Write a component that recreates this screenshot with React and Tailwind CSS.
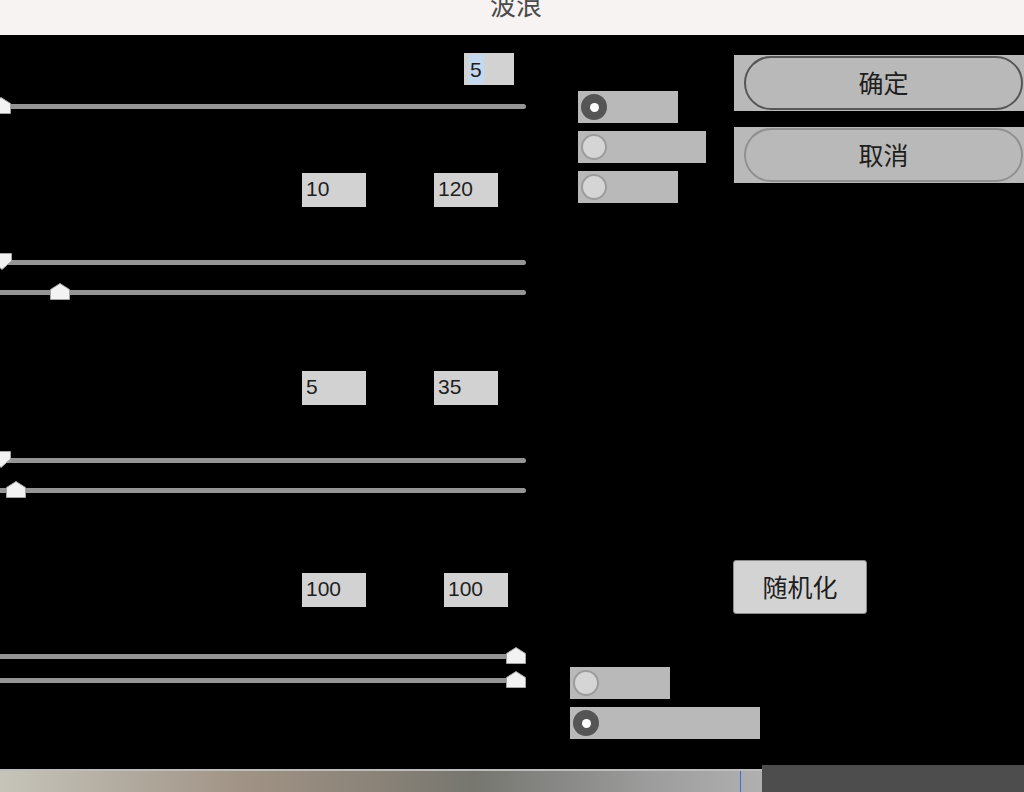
import React from "react";

const CJK = { fontFamily: '"Noto Sans CJK SC", "Noto Sans", sans-serif' };
const NUM = { fontFamily: '"Liberation Sans", Arial, sans-serif' };

function Thumb({ left, down }) {
  return (
    <svg
      className="absolute top-[1px]"
      style={{ left }}
      width="20"
      height="17"
      viewBox="0 0 20 17"
    >
      {down ? (
        <polygon
          points="0.5,0.5 19.5,0.5 19.5,8 10,16.5 0.5,8"
          fill="#f2f2f2"
          stroke="#a3a3a3"
          strokeWidth="1"
        />
      ) : (
        <polygon
          points="10,0.5 19.5,6.5 19.5,16.5 0.5,16.5 0.5,6.5"
          fill="#f2f2f2"
          stroke="#a3a3a3"
          strokeWidth="1"
        />
      )}
    </svg>
  );
}

function Slider({ mt, thumb, down }) {
  return (
    <div className={`relative h-[20px] w-[526px] shrink-0 ${mt}`}>
      <div className="absolute left-0 right-0 top-[8px] h-[5px] rounded-r-full bg-[#959595]" />
      <Thumb left={thumb} down={down} />
    </div>
  );
}

function NumBox({ value, w = "w-[64px]", h = "h-[34px]", highlight }) {
  return (
    <div
      className={`${w} ${h} bg-[#d2d2d2] flex items-center pl-[4px] text-[21px] text-[#1e1e1e] leading-none`}
      style={NUM}
    >
      {highlight ? (
        <span className="bg-[#c4d9ee] px-[2px] py-[4px]">{value}</span>
      ) : (
        <span className="pb-[3px]">{value}</span>
      )}
    </div>
  );
}

function Radio({ w, selected }) {
  return (
    <div className={`${w} h-[32px] bg-[#b9b9b9] flex items-center pl-[3px]`}>
      {selected ? (
        <div className="w-[26px] h-[26px] rounded-full bg-[#555555] flex items-center justify-center">
          <div className="w-[9px] h-[9px] rounded-full bg-white" />
        </div>
      ) : (
        <div className="w-[26px] h-[26px] rounded-full bg-[#d5d5d5] border-2 border-[#9c9c9c]" />
      )}
    </div>
  );
}

function PillButton({ label, border }) {
  return (
    <div className="w-[290px] h-[56px] bg-[#b9b9b9] flex items-center pl-[10px]">
      <div
        className={`w-[279px] h-[54px] rounded-full border-2 ${border} flex items-center justify-center text-[25px] text-[#1e1e1e]`}
        style={CJK}
      >
        {label}
      </div>
    </div>
  );
}

export default function App() {
  return (
    <div className="w-[1024px] h-[792px] overflow-hidden flex flex-col bg-black">
      {/* Title bar */}
      <div className="h-[35px] shrink-0 bg-[#f6f3f2] overflow-hidden flex justify-center pl-[8px]">
        <div className="-mt-[9px] text-[26px] leading-[26px] text-[#4b4b4b]" style={CJK}>
          波浪
        </div>
      </div>

      {/* Main content */}
      <div className="h-[734px] shrink-0 bg-black flex">
        {/* Left column: sliders and fields */}
        <div className="w-[526px] shrink-0 flex flex-col">
          <div className="mt-[18px] ml-[464px]">
            <NumBox value="5" w="w-[50px]" h="h-[32px]" highlight />
          </div>
          <Slider mt="mt-[11px]" thumb={-9} />

          <div className="mt-[57px] flex">
            <div className="ml-[302px]"><NumBox value="10" /></div>
            <div className="ml-[68px]"><NumBox value="120" /></div>
          </div>
          <Slider mt="mt-[45px]" thumb={-8} down />
          <Slider mt="mt-[10px]" thumb={50} />

          <div className="mt-[69px] flex">
            <div className="ml-[302px]"><NumBox value="5" /></div>
            <div className="ml-[68px]"><NumBox value="35" /></div>
          </div>
          <Slider mt="mt-[45px]" thumb={-9} down />
          <Slider mt="mt-[10px]" thumb={6} />

          <div className="mt-[73px] flex">
            <div className="ml-[302px]"><NumBox value="100" /></div>
            <div className="ml-[78px]"><NumBox value="100" /></div>
          </div>
          <Slider mt="mt-[39px]" thumb={506} />
          <Slider mt="mt-[4px]" thumb={506} />
        </div>

        {/* Right region */}
        <div className="ml-[44px] w-[454px] shrink-0 flex flex-col">
          <div className="mt-[20px] flex">
            <div className="ml-[8px] w-[156px] mt-[36px] flex flex-col gap-[8px]">
              <Radio w="w-[100px]" selected />
              <Radio w="w-[128px]" />
              <Radio w="w-[100px]" />
            </div>
            <div className="flex flex-col gap-[16px]">
              <PillButton label="确定" border="border-[#565656]" />
              <PillButton label="取消" border="border-[#909090]" />
            </div>
          </div>

          <div className="mt-[357px] ml-[163px]">
            <div
              className="w-[134px] h-[54px] bg-[#d3d3d3] border border-[#8a8a8a] rounded-[3px] flex items-center justify-center text-[25px] text-[#1e1e1e]"
              style={CJK}
            >
              随机化
            </div>
          </div>

          <div className="mt-[53px] flex flex-col gap-[8px]">
            <Radio w="w-[100px]" />
            <Radio w="w-[190px]" selected />
          </div>
        </div>
      </div>

      {/* Bottom strip */}
      <div className="h-[23px] shrink-0 flex">
        <div
          className="relative w-[762px] h-[23px] border-t-2 border-[#bdbdbd]"
          style={{
            background:
              "linear-gradient(to right, #c6c4ba 0%, #b0a89c 18%, #a09385 32%, #8c8479 48%, #76766f 62%, #858583 72%, #9c9c9c 85%, #b0b0b0 100%)",
          }}
        >
          <div className="absolute left-[740px] top-0 bottom-0 w-[1px] bg-[#3b6fd6]" />
        </div>
        <div className="w-[262px] h-[27px] -mt-[4px] bg-[#4d4d4d]" />
      </div>
    </div>
  );
}
